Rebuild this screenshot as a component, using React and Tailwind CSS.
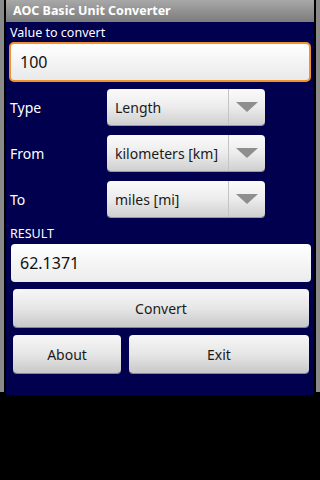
const font = { fontFamily: '"Noto Sans", "Open Sans", sans-serif' };

function Spinner({ value }) {
  return (
    <div className="flex h-[36px] w-[158px] items-stretch rounded-[4px] bg-gradient-to-b from-[#fbfbfb] via-[#ececec] to-[#cfcfcf] shadow-[0_1px_0_#9a9a9a]">
      <div className="flex flex-1 items-center pl-[8px] text-[14px] text-[#1a1a1a]">{value}</div>
      <div className="w-px bg-[#c4c4c4]" />
      <div className="flex w-[36px] items-center justify-center">
        <svg width="22" height="10" viewBox="0 0 22 10">
          <polygon points="0,0 22,0 11,10" fill="#8e8e8e" />
        </svg>
      </div>
    </div>
  );
}

function Row({ label, value }) {
  return (
    <div className="flex items-center">
      <div className="w-[98px] pl-[1px] text-[14px] text-white">{label}</div>
      <Spinner value={value} />
    </div>
  );
}

function Button({ children, className }) {
  return (
    <div
      className={
        "flex h-[38px] items-center justify-center rounded-[4px] bg-gradient-to-b from-[#f7f7f7] via-[#e6e6e6] to-[#c9c9c9] text-[14px] text-[#1a1a1a] shadow-[0_1px_0_#888] " +
        className
      }
    >
      {children}
    </div>
  );
}

export default function App() {
  return (
    <div className="h-[480px] w-[320px] bg-black" style={font}>
      <div className="flex h-[395px]">
        <div className="h-[392px] w-[4px] bg-[#8a8a8a]" />
        <div className="w-[2px]" />
        <div className="flex w-[308px] flex-col bg-[#00004e]">
          {/* Title bar */}
          <div className="flex h-[22px] items-center bg-gradient-to-b from-[#a8a8a8] to-[#7c7c7c] pl-[7px] text-[12.5px] font-bold text-white">
            AOC Basic Unit Converter
          </div>

          <div className="flex flex-col px-[3px]">
            <div className="pl-[1px] pt-[2px] text-[12.5px] leading-[17px] text-white">Value to convert</div>
            <div className="mt-[1px] flex h-[40px] items-center rounded-[5px] border-2 border-[#f0922e] bg-gradient-to-b from-[#ffffff] to-[#e9e9e9] pl-[9px] text-[16px] text-[#111]">
              100
            </div>

            <div className="mt-[7px] flex flex-col gap-[10px]">
              <Row label="Type" value="Length" />
              <Row label="From" value="kilometers [km]" />
              <Row label="To" value="miles [mi]" />
            </div>

            <div className="mt-[8px] pl-[1px] text-[12.5px] leading-[17px] text-white">RESULT</div>
            <div className="ml-[2px] mt-[2px] flex h-[38px] items-center rounded-[4px] bg-gradient-to-b from-[#ffffff] to-[#ececec] pl-[9px] text-[16px] text-[#111]">
              62.1371
            </div>

            <div className="mt-[7px] flex flex-col gap-[8px] pl-[4px] pr-[2px]">
              <Button>Convert</Button>
              <div className="flex gap-[8px]">
                <Button className="w-[108px]">About</Button>
                <Button className="flex-1">Exit</Button>
              </div>
            </div>
          </div>
        </div>
        <div className="w-[2px]" />
        <div className="h-[392px] w-[4px] bg-[#8a8a8a]" />
      </div>
    </div>
  );
}
